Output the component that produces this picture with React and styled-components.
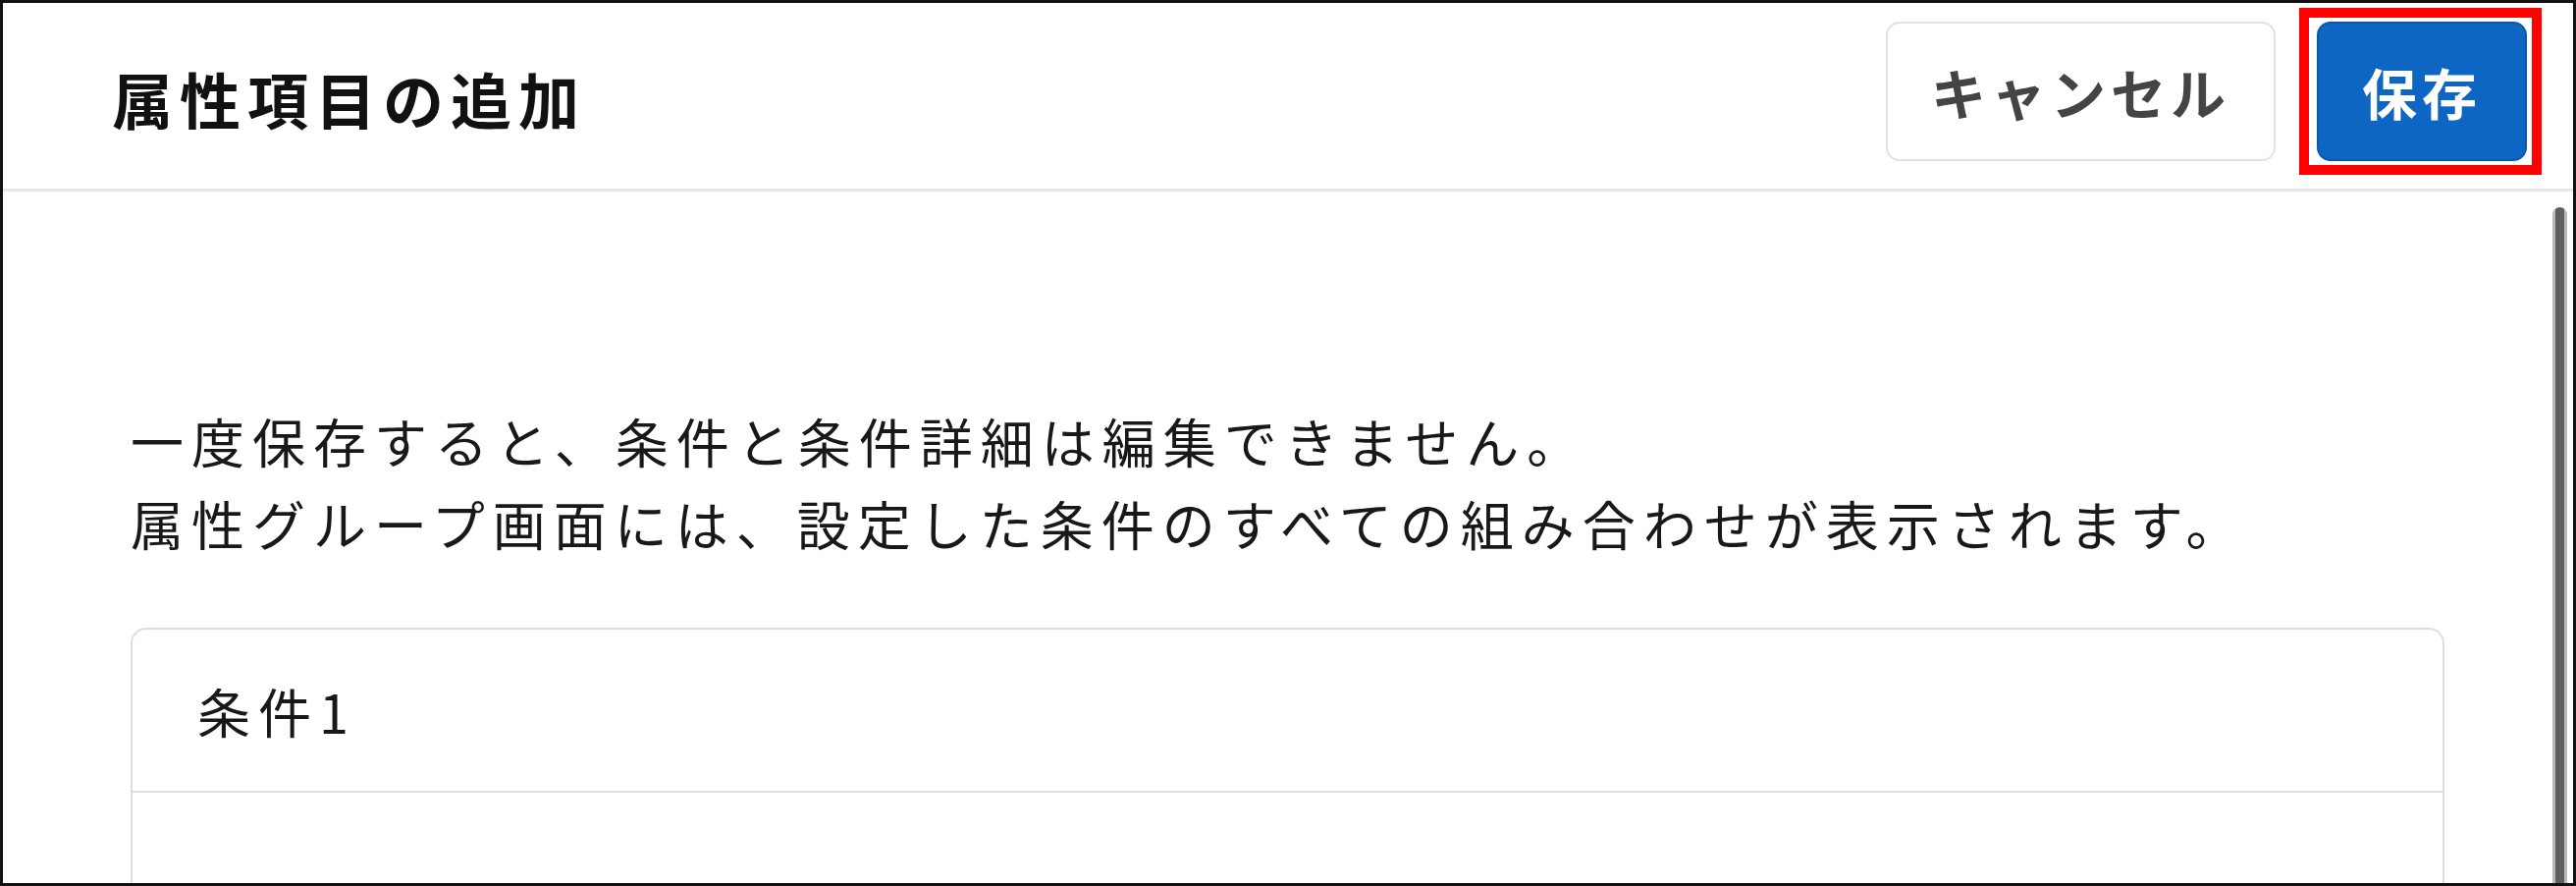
import React from 'react'
import styled, { createGlobalStyle, css } from 'styled-components'

const GlobalStyle = createGlobalStyle`
  html, body {
    margin: 0;
    padding: 0;
    background: #fff;
  }
  body {
    font-family: "Noto Sans CJK JP", "Noto Sans", sans-serif;
    color: #181818;
  }
  * {
    box-sizing: border-box;
  }
`

const Frame = styled.div`
  width: 2624px;
  height: 902px;
  border: 3px solid #111;
  display: flex;
  flex-direction: column;
  overflow: hidden;
  background: #fff;
`

const Header = styled.header`
  flex: none;
  height: 192px;
  display: flex;
  align-items: center;
  justify-content: space-between;
  padding: 0 32px 0 111px;
  border-bottom: 3px solid #e6e7e9;
`

const Title = styled.h1`
  margin: 0;
  padding-top: 4px;
  font-size: 62px;
  font-weight: 700;
  letter-spacing: 7px;
  line-height: 1;
  color: #111;
`

const Actions = styled.div`
  display: flex;
  align-items: center;
  gap: 24px;
  padding-bottom: 9px;
`

const Button = styled.button`
  height: 142px;
  padding: 0 44px;
  border-radius: 14px;
  border: 2px solid;
  font-family: inherit;
  font-size: 56px;
  font-weight: 700;
  letter-spacing: 5px;
  line-height: 1;
  cursor: pointer;

  ${p => p.$primary ? css`
    background: #0d66c2;
    border-color: #0a58aa;
    color: #fff;
  ` : css`
    background: #fff;
    border-color: #e2e2e2;
    color: #444;
  `}
`

/* red callout drawn round the save action */
const Highlight = styled.div`
  display: flex;
  border: 10px solid #ff0000;
  padding: 4px 5px 4px 8px;
`

const Body = styled.div`
  flex: 1;
  min-height: 0;
  display: flex;
`

const Content = styled.main`
  flex: 1;
  padding: 212px 105px 0 130px;
`

const Notice = styled.p`
  margin: 0 0 64px;
  font-size: 54px;
  letter-spacing: 8px;
  line-height: 84px;
  color: #181818;
`

const Card = styled.section`
  border: 2px solid #d8dde6;
  border-radius: 16px;
`

const CardHeader = styled.div`
  padding: 41px 0 39px 66px;
  border-bottom: 2px solid #d8dde6;
`

const CardTitle = styled.h2`
  margin: 0;
  font-size: 54px;
  font-weight: 400;
  letter-spacing: 8px;
  line-height: 84px;
  color: #181818;
`

const CardBody = styled.div`
  min-height: 300px;
`

const Track = styled.div`
  flex: none;
  width: 26px;
  padding: 16px 6px 0 5px;
  display: flex;
`

const Thumb = styled.div`
  flex: 1;
  border-radius: 8px 8px 0 0;
  background: linear-gradient(
    to right,
    #b8b8b8 0 3px,
    #5f5f5f 3px 12px,
    #b8b8b8 12px
  );
`

export default function App() {
  return (
    <>
      <GlobalStyle />
      <Frame>
        <Header>
          <Title>属性項目の追加</Title>
          <Actions>
            <Button>キャンセル</Button>
            <Highlight>
              <Button $primary>保存</Button>
            </Highlight>
          </Actions>
        </Header>
        <Body>
          <Content>
            <Notice>
              一度保存すると、条件と条件詳細は編集できません。
              <br />
              属性グループ画面には、設定した条件のすべての組み合わせが表示されます。
            </Notice>
            <Card>
              <CardHeader>
                <CardTitle>条件1</CardTitle>
              </CardHeader>
              <CardBody />
            </Card>
          </Content>
          <Track>
            <Thumb />
          </Track>
        </Body>
      </Frame>
    </>
  )
}
